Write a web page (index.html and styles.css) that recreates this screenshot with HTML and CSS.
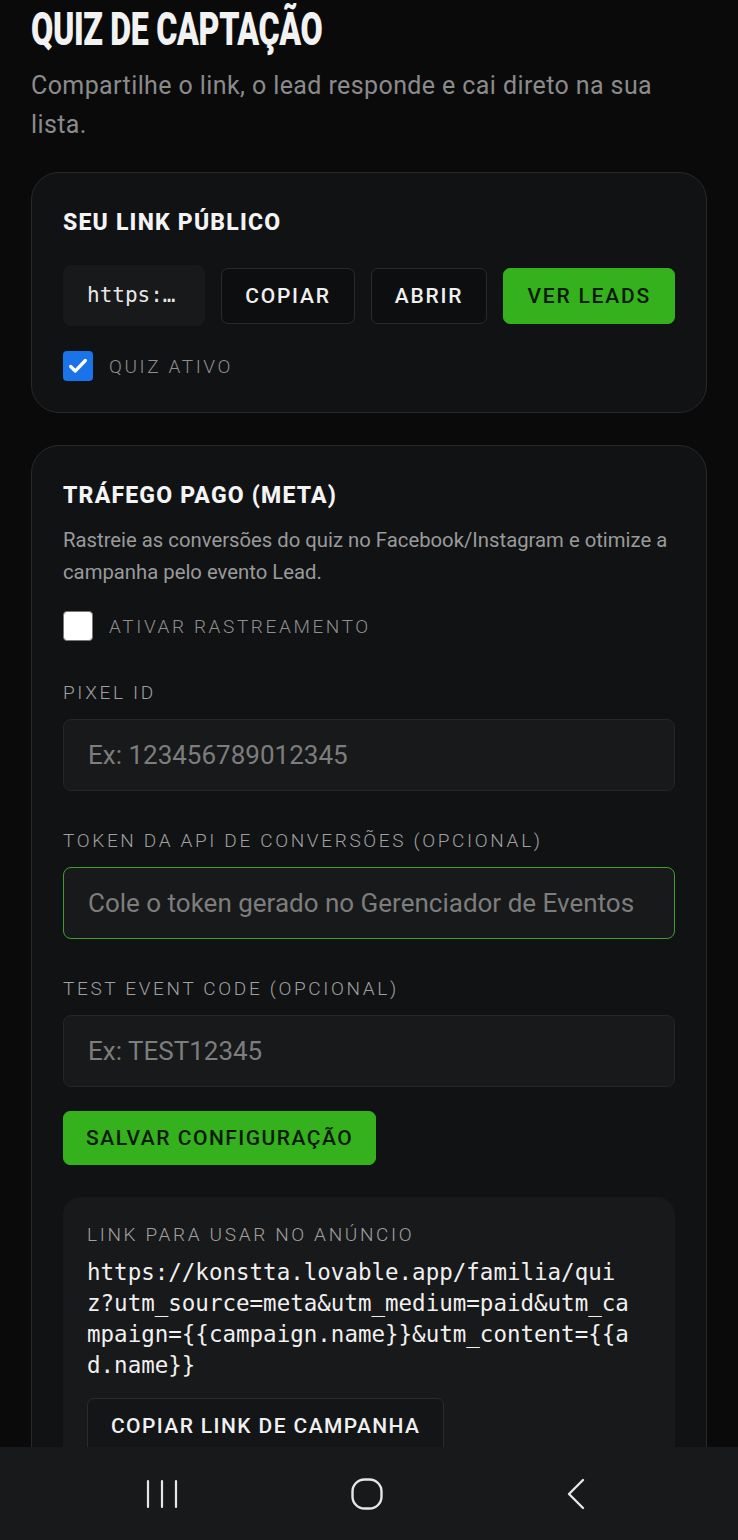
FILE: index.html
```html
<!DOCTYPE html>
<html>
<head>
  <meta charset="UTF-8">
  <title>Quiz de Captação</title>
  <link rel="stylesheet" href="styles.css">
</head>
<body>
  <div class="page">
    <h1 class="title">QUIZ DE CAPTAÇÃO</h1>
    <p class="subtitle">Compartilhe o link, o lead responde e cai direto na sua lista.</p>

    <!-- Link publico -->
    <div class="card">
      <h2 class="card-title">SEU LINK PÚBLICO</h2>
      <div class="link-row">
        <div class="link-box">https:…</div>
        <button class="btn btn-dark">COPIAR</button>
        <button class="btn btn-dark">ABRIR</button>
        <button class="btn btn-green">VER LEADS</button>
      </div>
      <label class="check-row">
        <span class="check check-on">
          <svg width="22" height="22" viewBox="0 0 24 24"><path d="M4 12.5l5 5L20 6" fill="none" stroke="#fff" stroke-width="3.6" stroke-linecap="round" stroke-linejoin="round"/></svg>
        </span>
        <span class="check-label">QUIZ ATIVO</span>
      </label>
    </div>

    <!-- Trafego pago -->
    <div class="card card-meta">
      <h2 class="card-title">TRÁFEGO PAGO (META)</h2>
      <p class="card-desc">Rastreie as conversões do quiz no Facebook/Instagram e otimize a campanha pelo evento Lead.</p>
      <label class="check-row check-row-meta">
        <span class="check check-off"></span>
        <span class="check-label">ATIVAR RASTREAMENTO</span>
      </label>

      <div class="field">
        <div class="field-label">PIXEL ID</div>
        <div class="input">Ex: 123456789012345</div>
      </div>
      <div class="field">
        <div class="field-label">TOKEN DA API DE CONVERSÕES (OPCIONAL)</div>
        <div class="input input-focus">Cole o token gerado no Gerenciador de Eventos</div>
      </div>
      <div class="field">
        <div class="field-label">TEST EVENT CODE (OPCIONAL)</div>
        <div class="input">Ex: TEST12345</div>
      </div>

      <button class="btn btn-green btn-save">SALVAR CONFIGURAÇÃO</button>

      <div class="campaign">
        <div class="field-label">LINK PARA USAR NO ANÚNCIO</div>
        <div class="campaign-url">https://konstta.lovable.app/familia/quiz?utm_source=meta&amp;utm_medium=paid&amp;utm_campaign={{campaign.name}}&amp;utm_content={{ad.name}}</div>
        <button class="btn btn-dark btn-campaign">COPIAR LINK DE CAMPANHA</button>
      </div>
    </div>
  </div>

  <!-- barra de navegacao do sistema -->
  <div class="navbar">
    <svg width="32" height="30" viewBox="0 0 32 30"><path d="M2 2v26M16 2v26M30 2v26" stroke="#e6e6e6" stroke-width="2.2" stroke-linecap="round"/></svg>
    <svg width="32" height="32" viewBox="0 0 32 32"><rect x="1.5" y="1.5" width="29" height="29" rx="12" fill="none" stroke="#e6e6e6" stroke-width="2.4"/></svg>
    <svg class="nav-back" width="20" height="32" viewBox="0 0 20 32"><path d="M17 2L3 16l14 14" fill="none" stroke="#e6e6e6" stroke-width="2.4" stroke-linecap="round" stroke-linejoin="round"/></svg>
  </div>
</body>
</html>
```

FILE: styles.css
```css
body { margin: 0; background: #0a0a0b; color: #f0f0f0; font-family: Roboto, sans-serif; }
button { font-family: inherit; cursor: pointer; }
.page { padding: 0 31px 140px; }

.title { margin: 0; padding-top: 5px; font-size: 47px; line-height: 47px; font-weight: 900; letter-spacing: -0.5px; color: #f2f2f2; transform: scaleX(0.685); transform-origin: top left; white-space: nowrap; }
.subtitle { margin: 14px 0 28px; font-size: 25px; line-height: 39px; letter-spacing: 0.4px; color: #8b8b8b; max-width: 650px; }

.card { background: #111214; border: 1px solid #28292c; border-radius: 28px; padding: 37px 31px 31px; margin-bottom: 32px; }
.card-title { margin: 0; font-size: 23px; line-height: 26px; font-weight: 800; letter-spacing: 1.2px; color: #f4f4f4; }

.link-row { display: flex; align-items: center; gap: 16px; margin-top: 29px; }
.link-box { flex: 1; height: 61px; line-height: 61px; padding-left: 24px; background: #18191b; border-radius: 8px; font-family: "DejaVu Sans Mono", monospace; font-size: 21px; color: #e8e8e8; white-space: nowrap; overflow: hidden; }
.btn { height: 56px; padding: 0 23px; border-radius: 7px; font-size: 21px; font-weight: 500; letter-spacing: 1.8px; }
.btn-dark { background: #0d0e0f; border: 1px solid #2a2b2e; color: #f0f0f0; }
.btn-green { background: #34b11c; border: 1px solid #34b11c; color: #0b1a07; }

.check-row { display: flex; align-items: center; gap: 16px; margin-top: 25px; }
.check { width: 30px; height: 30px; border-radius: 4px; display: flex; align-items: center; justify-content: center; box-sizing: border-box; }
.check-on { background: #1a73e8; }
.check-off { background: #fff; border: 1px solid #777; }
.check-label { font-size: 19px; font-weight: 300; letter-spacing: 2.6px; color: #8f8f8f; }

.card-meta { padding-bottom: 0; margin-bottom: 0; }
.card-desc { margin: 15px 0 0; font-size: 20.3px; line-height: 32px; color: #9a9a9a; }
.check-row-meta { margin-top: 23px; }

.field { margin-top: 40px; }
.field + .field { margin-top: 38px; }
.field-label { font-size: 19px; line-height: 24px; font-weight: 300; letter-spacing: 2.65px; color: #a0a0a0; }
.input { margin-top: 14px; height: 70px; line-height: 70px; padding-left: 24px; background: #18191b; border: 1px solid #25262a; border-radius: 8px; font-size: 26px; color: #7d7d7d; white-space: nowrap; overflow: hidden; }
.input-focus { border-color: #3b9f2a; }

.btn-save { margin-top: 24px; height: 54px; padding: 0 22px; letter-spacing: 1.5px; }

.campaign { margin-top: 32px; background: #18191b; border-radius: 18px; padding: 26px 24px 40px; }
.campaign-url { margin-top: 10px; font-family: "DejaVu Sans Mono", monospace; font-size: 22.5px; line-height: 31px; color: #f0f0f0; word-break: break-all; width: 555px; }
.btn-campaign { margin-top: 17px; background: #141517; letter-spacing: 1.4px; }

.navbar { position: fixed; left: 0; right: 0; bottom: 0; height: 93px; background: #18191b; display: flex; align-items: center; gap: 173px; padding-left: 146px; }
.nav-back { margin-left: 10px; }
```
